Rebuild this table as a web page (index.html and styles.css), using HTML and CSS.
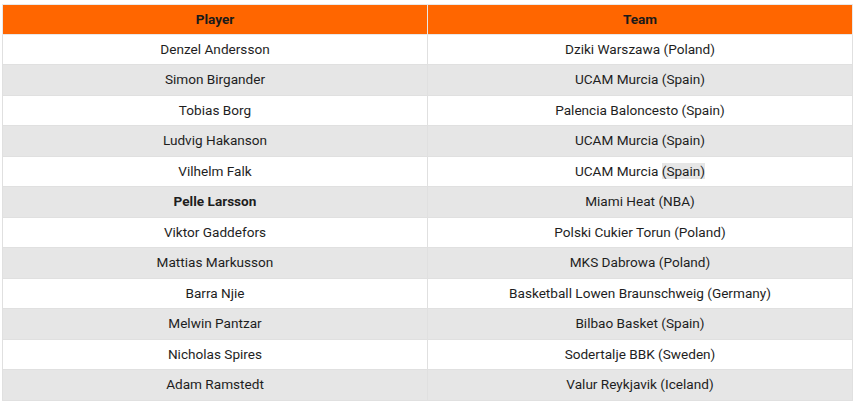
FILE: index.html
```html
<!DOCTYPE html>
<html>
<head>
<meta charset="utf-8">
<link rel="stylesheet" href="styles.css">
</head>
<body>
<table class="roster">
  <thead>
    <tr><th>Player</th><th>Team</th></tr>
  </thead>
  <tbody>
    <tr><td>Denzel Andersson</td><td>Dziki Warszawa (Poland)</td></tr>
    <tr><td>Simon Birgander</td><td>UCAM Murcia (Spain)</td></tr>
    <tr><td>Tobias Borg</td><td>Palencia Baloncesto (Spain)</td></tr>
    <tr><td>Ludvig Hakanson</td><td>UCAM Murcia (Spain)</td></tr>
    <tr><td>Vilhelm Falk</td><td>UCAM Murcia <span class="mark">(Spain)</span></td></tr>
    <tr><td class="bold">Pelle Larsson</td><td>Miami Heat (NBA)</td></tr>
    <tr><td>Viktor Gaddefors</td><td>Polski Cukier Torun (Poland)</td></tr>
    <tr><td>Mattias Markusson</td><td>MKS Dabrowa (Poland)</td></tr>
    <tr><td>Barra Njie</td><td>Basketball Lowen Braunschweig (Germany)</td></tr>
    <tr><td>Melwin Pantzar</td><td>Bilbao Basket (Spain)</td></tr>
    <tr><td>Nicholas Spires</td><td>Sodertalje BBK (Sweden)</td></tr>
    <tr><td>Adam Ramstedt</td><td>Valur Reykjavik (Iceland)</td></tr>
  </tbody>
</table>
</body>
</html>
```
FILE: styles.css
```css
html, body {
  margin: 0;
  padding: 0;
  background: #ffffff;
}
body {
  padding: 4px 0 0 2px;
  font-family: Roboto, "Liberation Sans", Arial, sans-serif;
  font-size: 13.6px;
  color: #1e1e1e;
}
.roster {
  width: 851px;
  border-collapse: collapse;
  table-layout: fixed;
}
.roster th,
.roster td {
  width: 50%;
  border: 1px solid #e0e0e0;
  padding: 5px;
  line-height: 19.5px;
  text-align: center;
}
.roster th {
  background: #ff6600;
  color: #1a1a1a;
  font-weight: bold;
  border-color: #e8e8e8;
  padding: 5px 5px 4px;
}
.roster tbody tr:nth-child(even) td {
  background: #e6e6e6;
}
.roster .bold {
  font-weight: bold;
}
.mark {
  background: #e6e6e6;
}
```
